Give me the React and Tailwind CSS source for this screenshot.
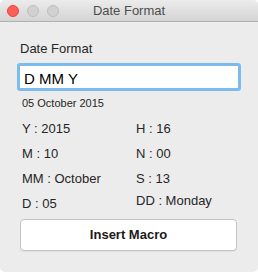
import React, { useState } from "react";

const rows = [
  ["Y : 2015", "H : 16"],
  ["M : 10", "N : 00"],
  ["MM : October", "S : 13"],
  ["D : 05", "DD : Monday"],
];

function TrafficLights() {
  return (
    <div className="flex items-center gap-[8px] pl-[7px] h-full">
      <span className="w-[12px] h-[12px] rounded-full bg-[#fc5f57] border border-[#e2463f]" />
      <span className="w-[12px] h-[12px] rounded-full bg-[#d1d1d1] border border-[#bdbdbd]" />
      <span className="w-[12px] h-[12px] rounded-full bg-[#d1d1d1] border border-[#bdbdbd]" />
    </div>
  );
}

export default function App() {
  const [format, setFormat] = useState("D MM Y");

  return (
    <div className="w-[258px] h-[272px] bg-white font-['Liberation_Sans',Arial,sans-serif]">
      <div className="w-full h-full rounded-[5px] overflow-hidden bg-[#ececec] flex flex-col">
        {/* Title bar */}
        <div className="relative h-[22px] shrink-0 bg-gradient-to-b from-[#ececec] to-[#d4d4d4] border-b border-[#b1b1b1]">
          <TrafficLights />
          <div className="absolute inset-0 flex items-center justify-center text-[13px] leading-[22px] text-[#4d4d4d]">
            Date Format
          </div>
        </div>

        <div className="flex flex-col pt-[19px] text-[#262626]">
          <div className="pl-[20px] text-[13px] leading-[16px]">Date Format</div>

          <div className="mt-[6px] ml-[17px] w-[224px] h-[28px] rounded-[3px] border-[3px] border-[#7cbbed] bg-white">
            <input
              className="w-full h-full pl-[4px] pt-[2px] text-[15px] leading-[20px] text-black outline-none bg-transparent"
              value={format}
              onChange={(e) => setFormat(e.target.value)}
            />
          </div>

          <div className="mt-[6px] pl-[22px] text-[11px] leading-[13px]">05 October 2015</div>

          <div className="mt-[6px] pl-[22px] grid grid-cols-[114px_1fr] text-[13px] leading-[25px]">
            {rows.map(([left, right], i) => (
              <React.Fragment key={i}>
                <div>{left}</div>
                <div className={i === 3 ? "-mt-[3px]" : ""}>{right}</div>
              </React.Fragment>
            ))}
          </div>

          <button className="mt-[3px] ml-[20px] w-[217px] h-[32px] rounded-[4px] border border-[#c4c4c4] bg-white flex items-center justify-center pb-[1px] text-[13px] font-bold text-[#1a1a1a] shadow-[0_1px_0_rgba(0,0,0,0.05)]">
            Insert Macro
          </button>
        </div>
      </div>
    </div>
  );
}
